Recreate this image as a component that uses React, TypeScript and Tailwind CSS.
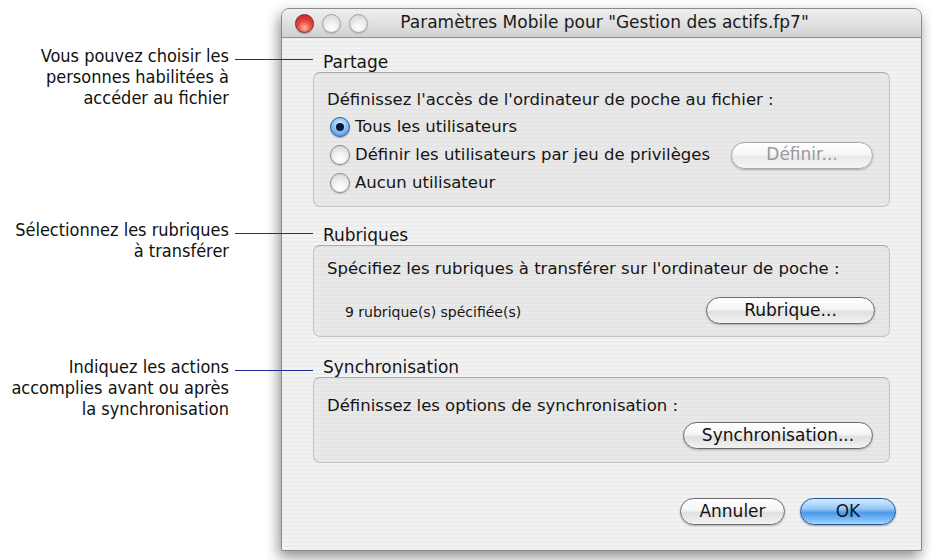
import React from "react";

const FONT = { fontFamily: '"DejaVu Sans", "Noto Sans", sans-serif' };
const NOTE_FONT = { fontFamily: '"DejaVu Sans Condensed", Roboto, "Liberation Sans", sans-serif' };

function Note({ lines, className }: { lines: string[]; className: string }) {
  return (
    <div className={"relative pr-[52px] text-right text-[18px] leading-[21px] text-[#111] " + className} style={NOTE_FONT}>
      {lines.map((l, i) => (
        <div key={i}>{l}</div>
      ))}
      <div className="absolute left-[235px] top-[14px] w-[78px] h-px bg-[#1f2a9c] z-10" />
    </div>
  );
}

function Radio({ checked }: { checked?: boolean }) {
  if (checked) {
    return (
      <span className="w-[20px] h-[20px] shrink-0 rounded-full border border-[#2f5f9e] bg-[radial-gradient(circle_at_50%_35%,#e4f2ff_0%,#8cc4f5_45%,#3d86d8_100%)] flex items-center justify-center shadow-[0_1px_1px_rgba(0,0,0,0.3)]">
        <span className="w-[8px] h-[8px] rounded-full bg-[#0e1a30]" />
      </span>
    );
  }
  return (
    <span className="w-[20px] h-[20px] shrink-0 rounded-full border border-[#8c8c8c] bg-[radial-gradient(circle_at_50%_75%,#ffffff_0%,#f2f2f2_40%,#cfcfcf_100%)] shadow-[0_1px_1px_rgba(0,0,0,0.2)]" />
  );
}

function AquaButton({ children, className, disabled }: { children: React.ReactNode; className: string; disabled?: boolean }) {
  return (
    <div
      className={
        "h-[27px] shrink-0 rounded-full flex items-center justify-center text-[17px] shadow-[0_1px_2px_rgba(0,0,0,0.25)] " +
        (disabled
          ? "border border-[#a8a8a8] text-[#9a9a9a] bg-[linear-gradient(180deg,#ffffff_0%,#f6f6f6_45%,#e9e9e9_55%,#f4f4f4_100%)] "
          : "border border-[#6a6a6a] text-[#111] bg-[linear-gradient(180deg,#ffffff_0%,#f5f5f5_45%,#e0e0e0_55%,#f3f3f3_100%)] ") +
        className
      }
    >
      {children}
    </div>
  );
}

function Light({ red }: { red?: boolean }) {
  return red ? (
    <span className="w-[19px] h-[19px] rounded-full border border-[#8e2a26] bg-[radial-gradient(circle_at_50%_75%,#ffb3a8_0%,#e4473d_45%,#b82018_100%)] shadow-[0_1px_1px_rgba(0,0,0,0.3)]" />
  ) : (
    <span className="w-[19px] h-[19px] rounded-full border border-[#a3a3a3] bg-[radial-gradient(circle_at_50%_75%,#ffffff_0%,#ececec_45%,#cfcfcf_100%)] shadow-[0_1px_1px_rgba(0,0,0,0.15)]" />
  );
}

const GROUP =
  "rounded-[7px] border border-[#c2c2c2] border-t-[#a9a9a9] bg-[repeating-linear-gradient(180deg,#e4e4e4_0px,#e4e4e4_2px,#e9e9e9_2px,#e9e9e9_4px)]";

export default function App() {
  return (
    <div className="w-[932px] h-[560px] bg-white flex overflow-hidden text-[#151515]">
      <div className="w-[281px] shrink-0 flex flex-col pt-[45px] relative z-10">
        <Note lines={["Vous pouvez choisir les", "personnes habilitées à", "accéder au fichier"]} className="" />
        <Note lines={["Sélectionnez les rubriques", "à transférer"]} className="mt-[111px]" />
        <Note lines={["Indiquez les actions", "accomplies avant ou après", "la synchronisation"]} className="mt-[95px]" />
      </div>

      <div
        className="mt-[8px] w-[641px] h-[543px] shrink-0 flex flex-col rounded-t-[8px] border border-[#8a8a8a] shadow-[-2px_6px_14px_rgba(0,0,0,0.45)] overflow-hidden bg-[repeating-linear-gradient(180deg,#ececec_0px,#ececec_2px,#f3f3f3_2px,#f3f3f3_4px)]"
        style={FONT}
      >
        {/* title bar */}
        <div className="h-[29px] shrink-0 relative flex items-center border-b border-[#8f8f8f] bg-[linear-gradient(180deg,#efefef_0%,#dedede_60%,#d0d0d0_100%)]">
          <div className="flex items-center gap-[8px] pl-[13px]">
            <Light red />
            <Light />
            <Light />
          </div>
          <div className="absolute inset-0 flex items-center justify-center text-[17px] text-[#1a1a1a] pl-[6px]">
            Paramètres Mobile pour "Gestion des actifs.fp7"
          </div>
        </div>

        {/* body */}
        <div className="flex-1 flex flex-col px-[31px] pt-[14px]">
          <div className="text-[17px] leading-[20px] pl-[10px]">Partage</div>
          <div className={GROUP + " mt-0 h-[135px] pt-[17px] pl-[13px] pr-[16px]"}>
            <div className="text-[16.5px] leading-[20px]">Définissez l'accès de l'ordinateur de poche au fichier :</div>
            <div className="mt-[3px] flex flex-col text-[16.5px]">
              <div className="h-[28px] flex items-center gap-[5px] pl-[3px]">
                <Radio checked />
                <span>Tous les utilisateurs</span>
              </div>
              <div className="h-[28px] flex items-center justify-between pl-[3px]">
                <div className="flex items-center gap-[5px]">
                  <Radio />
                  <span>Définir les utilisateurs par jeu de privilèges</span>
                </div>
                <AquaButton disabled className="w-[142px]">Définir...</AquaButton>
              </div>
              <div className="h-[28px] flex items-center gap-[5px] pl-[3px]">
                <Radio />
                <span>Aucun utilisateur</span>
              </div>
            </div>
          </div>

          <div className="mt-[18px] text-[17px] leading-[20px] pl-[10px]">Rubriques</div>
          <div className={GROUP + " mt-0 h-[92px] pt-[13px] pl-[13px] pr-[14px]"}>
            <div className="text-[16.5px] leading-[20px]">Spécifiez les rubriques à transférer sur l'ordinateur de poche :</div>
            <div className="mt-[18px] flex items-center justify-between">
              <span className="text-[14px] pl-[18px] pt-[3px]">9 rubrique(s) spécifiée(s)</span>
              <AquaButton className="w-[169px]">Rubrique...</AquaButton>
            </div>
          </div>

          <div className="mt-[20px] text-[17px] leading-[20px] pl-[10px]">Synchronisation</div>
          <div className={GROUP + " mt-0 h-[86px] pt-[18px] pl-[13px] pr-[16px]"}>
            <div className="text-[16.5px] leading-[20px]">Définissez les options de synchronisation :</div>
            <div className="mt-[6px] flex justify-end">
              <AquaButton className="w-[190px]">Synchronisation...</AquaButton>
            </div>
          </div>

          <div className="mt-[35px] flex justify-end gap-[15px] mr-[-6px]">
            <AquaButton className="w-[105px]">Annuler</AquaButton>
            <div className="w-[96px] h-[27px] rounded-full flex items-center justify-center text-[17px] text-[#0c1830] border border-[#2a5592] shadow-[0_1px_2px_rgba(0,0,0,0.3)] bg-[linear-gradient(180deg,#d2eafe_0%,#93c8f7_40%,#4d98e6_55%,#7cc0fb_85%,#a9dcff_100%)]">
              OK
            </div>
          </div>
        </div>
      </div>
    </div>
  );
}
